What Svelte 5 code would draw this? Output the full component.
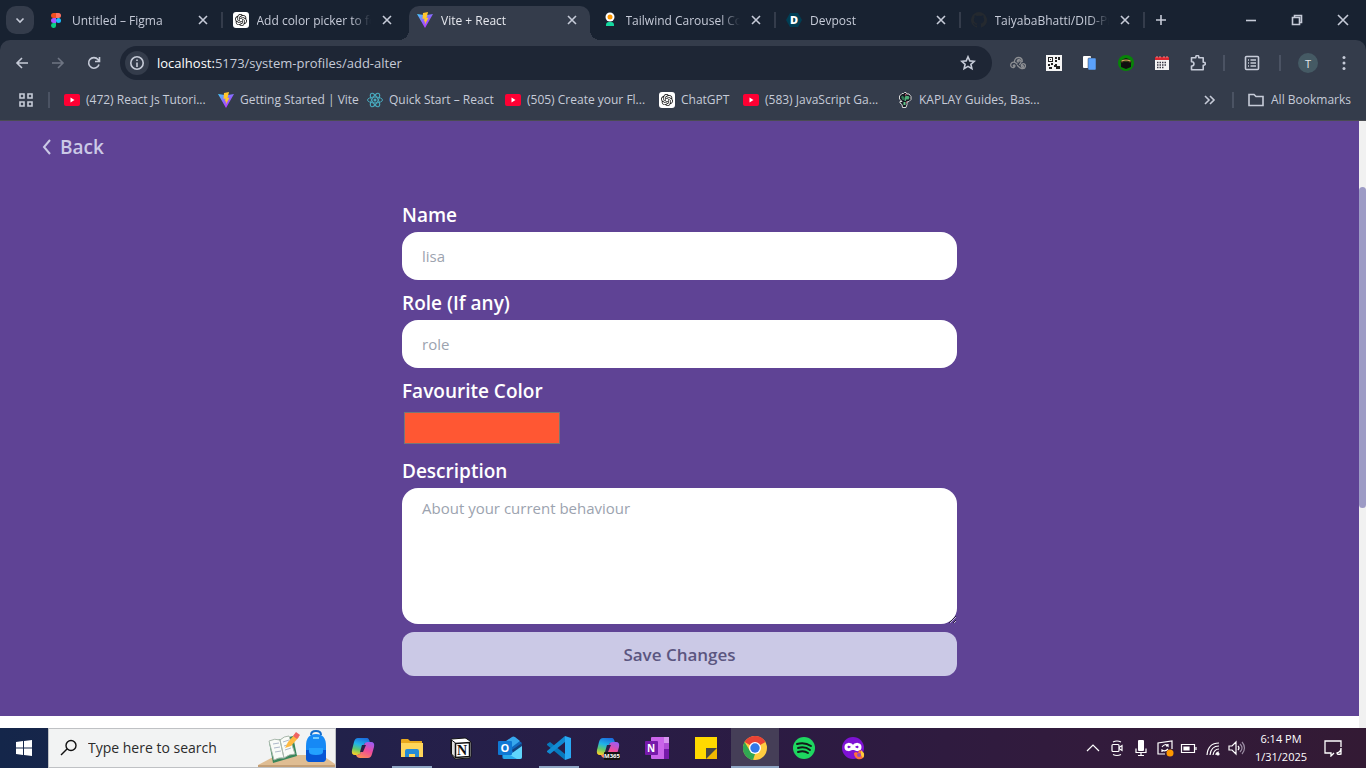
<script lang="ts">
	interface Tab {
		title: string;
		icon: string;
		active?: boolean;
		divider?: boolean;
	}

	interface App {
		name: string;
		icon: string;
		running?: boolean;
		focused?: boolean;
	}

	const tabs: Tab[] = [
		{ title: 'Untitled – Figma', icon: 'figma', divider: true },
		{ title: 'Add color picker to fo', icon: 'chatgpt' },
		{ title: 'Vite + React', icon: 'vite', active: true },
		{ title: 'Tailwind Carousel Co', icon: 'carousel', divider: true },
		{ title: 'Devpost', icon: 'devpost', divider: true },
		{ title: 'TaiyabaBhatti/DID-Pr', icon: 'github', divider: true }
	];

	const bookmarks = [
		{ title: '(472) React Js Tutori...', icon: 'youtube' },
		{ title: 'Getting Started | Vite', icon: 'vite' },
		{ title: 'Quick Start – React', icon: 'react' },
		{ title: '(505) Create your Fl...', icon: 'youtube' },
		{ title: 'ChatGPT', icon: 'chatgpt' },
		{ title: '(583) JavaScript Ga...', icon: 'youtube' },
		{ title: 'KAPLAY Guides, Bas...', icon: 'kaplay' }
	];

	const extensions = [
		{ name: 'Web extension', icon: 'swirl' },
		{ name: 'QR code', icon: 'qr' },
		{ name: 'Mobile simulator', icon: 'phones' },
		{ name: 'Black box', icon: 'box' },
		{ name: 'Calendar', icon: 'calendar' },
		{ name: 'Extensions', icon: 'puzzle' }
	];

	const apps: App[] = [
		{ name: 'Copilot', icon: 'copilot' },
		{ name: 'File Explorer', icon: 'explorer', running: true },
		{ name: 'Notion', icon: 'notion' },
		{ name: 'Outlook', icon: 'outlook' },
		{ name: 'Visual Studio Code', icon: 'vscode', running: true },
		{ name: 'Microsoft 365', icon: 'm365' },
		{ name: 'OneNote', icon: 'onenote' },
		{ name: 'Sticky Notes', icon: 'sticky' },
		{ name: 'Chrome', icon: 'chrome', running: true, focused: true },
		{ name: 'Spotify', icon: 'spotify' },
		{ name: 'Firefox Private', icon: 'private' }
	];

	const tray = ['up', 'meet', 'mic', 'sync', 'battery', 'wifi', 'volume'];

	let name = $state('');
	let role = $state('');
	let color = $state('#ff5733');
	let description = $state('');
</script>

{#snippet favicon(icon: string)}
	<svg class="favicon" viewBox="0 0 16 16" aria-hidden="true">
		{#if icon === 'figma'}
			<path d="M5.500 1H8v5H5.500a2.500 2.500 0 0 1 0-5z" fill="#f24e1e" />
			<path d="M8 1h2.500a2.500 2.500 0 0 1 0 5H8z" fill="#ff7262" />
			<path d="M5.500 6H8v5H5.500a2.500 2.500 0 0 1 0-5z" fill="#a259ff" />
			<circle cx="10.500" cy="8.500" r="2.500" fill="#1abcfe" />
			<path d="M5.500 11H8v2.300A2.500 2.500 0 1 1 5.500 11z" fill="#0acf83" />
		{:else if icon === 'chatgpt'}
			<rect width="16" height="16" rx="3" fill="#fff" />
			<path
				transform="translate(2 2) scale(0.5)"
				d="M22.2819 9.8211a5.9847 5.9847 0 0 0-.5157-4.9108 6.0462 6.0462 0 0 0-6.5098-2.9A6.0651 6.0651 0 0 0 4.9807 4.1818a5.9847 5.9847 0 0 0-3.9977 2.9 6.0462 6.0462 0 0 0 .7427 7.0966 5.98 5.98 0 0 0 .511 4.9107 6.051 6.051 0 0 0 6.5146 2.9001A5.9847 5.9847 0 0 0 13.2599 24a6.0557 6.0557 0 0 0 5.7718-4.2058 5.9894 5.9894 0 0 0 3.9977-2.9001 6.0557 6.0557 0 0 0-.7475-7.0729zm-9.022 12.6081a4.4755 4.4755 0 0 1-2.8764-1.0408l.1419-.0804 4.7783-2.7582a.7948.7948 0 0 0 .3927-.6813v-6.7369l2.02 1.1686a.071.071 0 0 1 .038.052v5.5826a4.504 4.504 0 0 1-4.4945 4.4944zm-9.6607-4.1254a4.4708 4.4708 0 0 1-.5346-3.0137l.142.0852 4.783 2.7582a.7712.7712 0 0 0 .7806 0l5.8428-3.3685v2.3324a.0804.0804 0 0 1-.0332.0615L9.74 19.9502a4.4992 4.4992 0 0 1-6.1408-1.6464zM2.3408 7.8956a4.485 4.485 0 0 1 2.3655-1.9728V11.6a.7664.7664 0 0 0 .3879.6765l5.8144 3.3543-2.0201 1.1685a.0757.0757 0 0 1-.071 0l-4.8303-2.7865A4.504 4.504 0 0 1 2.3408 7.872zm16.5963 3.8558L13.1038 8.364 15.1192 7.2a.0757.0757 0 0 1 .071 0l4.8303 2.7913a4.4944 4.4944 0 0 1-.6765 8.1042v-5.6772a.79.79 0 0 0-.407-.667zm2.0107-3.0231l-.142-.0852-4.7735-2.7818a.7759.7759 0 0 0-.7854 0L9.409 9.2297V6.8974a.0662.0662 0 0 1 .0284-.0615l4.8303-2.7866a4.4992 4.4992 0 0 1 6.6802 4.66zM8.3065 12.863l-2.02-1.1638a.0804.0804 0 0 1-.038-.0567V6.0742a4.4992 4.4992 0 0 1 7.3757-3.4537l-.142.0805L8.704 5.459a.7948.7948 0 0 0-.3927.6813zm1.0976-2.3654l2.602-1.4998 2.6069 1.4998v2.9994l-2.5974 1.4997-2.6067-1.4997Z"
				fill="#111"
			/>
		{:else if icon === 'vite'}
			<path d="M0 2l8 14 8-14-7.500 1.300z" fill="url(#vite-body)" />
			<path d="M11 0L6 1l-.5 6 2-.4-.6 3 1.300-.3-.5 3.400 3.800-7-2 .3z" fill="#ffc62b" />
		{:else if icon === 'carousel'}
			<circle cx="8" cy="5" r="4.500" fill="#fff" />
			<circle cx="8" cy="5" r="2.500" fill="#ff9800" />
			<path d="M4 14v-1a3 3 0 0 1 3-3h2a3 3 0 0 1 3 3v1z" fill="#14d9a0" />
		{:else if icon === 'devpost'}
			<path d="M4 1h8l4 7-4 7H4L0 8z" fill="#003e54" />
			<text x="8" y="12" text-anchor="middle" font-size="11" font-weight="800" fill="#fff">D</text>
		{:else if icon === 'github'}
			<path
				d="M8 0a8 8 0 0 0-2.500 15.600c.4 0 .5-.2.500-.4v-1.500c-2.200.5-2.700-1-2.700-1-.4-.9-.9-1.200-.9-1.200-.7-.5.100-.5.100-.5.800.100 1.200.8 1.200.8.7 1.300 1.900.9 2.300.7 0-.5.300-.9.500-1.100C4.800 11.200 2.900 10.500 2.900 7.400c0-.9.300-1.500.8-2.100-.1-.3-.4-1 .1-2.100 0 0 .7-.2 2.200.8a8 8 0 0 1 4 0c1.500-1 2.200-.8 2.200-.8.5 1.100.2 1.800.1 2.100.5.600.8 1.200.8 2.100 0 3.100-1.900 3.800-3.700 4 .3.300.6.800.6 1.500v2.300c0 .2.100.5.500.4A8 8 0 0 0 8 0z"
				fill="#24292f"
			/>
		{:else if icon === 'youtube'}
			<rect y="2" width="16" height="12" rx="2" fill="#ff0033" />
			<path d="M6.500 5.500v5L10.500 8z" fill="#fff" />
		{:else if icon === 'react'}
			<g fill="none" stroke="#48a9bd" stroke-width="1">
				<ellipse cx="8" cy="8" rx="7.500" ry="3" />
				<ellipse cx="8" cy="8" rx="7.500" ry="3" transform="rotate(60 8 8)" />
				<ellipse cx="8" cy="8" rx="7.500" ry="3" transform="rotate(120 8 8)" />
			</g>
			<circle cx="8" cy="8" r="1.500" fill="#48a9bd" />
		{:else if icon === 'kaplay'}
			<path
				d="M5 1.500h1.500l1-1H9l1 1.500h2l2 2.500v3L12 9.500l-2 .5v2.500l-1 3H5.500l-.5-3L3 11V9.500h2L2.500 7V4z"
				fill="#141820"
				stroke="#d8d8d8"
				stroke-width="1"
			/>
			<path d="M4 5l1.500-1.500L7 5v3L5.500 8z" fill="#2f7653" />
			<path d="M8.500 4h3l1 1.500-1 2H9v1.500H7.500V6z" fill="#4fae78" />
			<path d="M6.500 10h2v3h-2z" fill="#65c58b" />
			<path d="M8 2h1.500v1.500H8zM9 9.500h1V11H9z" fill="#b8546c" />
		{/if}
	</svg>
{/snippet}

{#snippet extensionIcon(icon: string)}
	<svg class="ext" viewBox="0 0 16 16" aria-hidden="true">
		{#if icon === 'swirl'}
			<g fill="none" stroke="#8d8f93" stroke-width="1.300" stroke-linecap="round">
				<path d="M4 11.500a.8.8 0 1 1 .8-1.200c.6 1.600-1.400 2.900-2.900 2S.2 9 1.800 7.800s4-.4 5.200 1.200" />
				<path d="M8.500 5.300a.9.900 0 1 1-1.200 1C7 4.500 9.500 4 10.500 5.300s.5 3-.8 4M4.500 7C4.300 4.500 6 2.500 8.300 2.500s4 1.700 4 4" />
				<path d="M12 10.800a.9.900 0 1 1 .4 1.500c-1.600-.5-1.500-3 .2-3.500s3.100 1 2.800 2.600-2 2.500-3.700 2.200S9 12 7.500 10.500" />
			</g>
		{:else if icon === 'qr'}
			<rect width="16" height="16" fill="#f5f5f5" />
			<path d="M2 2h5v5H2zM9 2h2v2H9zM12 2h2v3h-2zM9 5h2v2H9zM2 9h2v2H2zM5 8h2v2H5zM3 12h3v2H3zM9 9h2v2h3v3h-4v-2H8v-2h1z" fill="#222" />
			<path d="M3 3h3v3H3z" fill="#f5f5f5" />
			<path d="M4 4h1v1H4z" fill="#222" />
		{:else if icon === 'phones'}
			<rect x="1" y="1" width="8" height="12" rx="1" fill="#fff" />
			<rect x="6" y="3" width="8" height="12" rx="1" fill="#5ba1fa" stroke="#343c4b" stroke-width="0.500" />
		{:else if icon === 'box'}
			<circle cx="8" cy="8" r="8" fill="#078407" />
			<path d="M3 7h10v5l-5 2-5-2z" fill="#101010" />
			<path d="M2 7q6-6 12 0l-2 1q-4-3-8 0z" fill="#382916" />
			<path d="M3 6q5-4 10 0l-1 .5q-4-2-8 0z" fill="#d6ad61" />
			<path d="M4 4.500L8 3l4 1.500z" fill="#101010" />
		{:else if icon === 'calendar'}
			<path d="M1 2h14v13H1z" fill="#f4f4f4" />
			<path d="M1 2h14v3H1z" fill="#db2730" />
			<path d="M3 1v2M6 1v2M10 1v2M13 1v2" stroke="#e88" />
			<path d="M3 7.500h10M3 10h10M3 12.500h7" stroke="#3a3946" stroke-width="1.500" stroke-dasharray="1.500 1" />
		{:else if icon === 'puzzle'}
			<path
				d="M1.500 2.800h4.300V2a1.500 1.500 0 0 1 3 0v.8h4.400v4.400h.6a1.500 1.500 0 0 1 0 3h-.6v4.500H1.500v-3.700h.3a2 2 0 0 0 0-4.300h-.3z"
				fill="none"
				stroke="#c6cbd8"
				stroke-width="1.600"
				stroke-linejoin="round"
			/>
		{/if}
	</svg>
{/snippet}

{#snippet appIcon(icon: string)}
	<svg class="app-icon" viewBox="0 0 24 24" aria-hidden="true">
		{#if icon === 'copilot' || icon === 'm365'}
			<path d="M7 2h9q2 0 3 5h-4q-2 0-3 4l-2 5q-1 3-4 3H4q-4 0-3-5l2-8q1-4 4-4z" fill="url(#copilot-left)" />
			<path d="M17 6h3q4 0 3 5l-2 7q-1 4-4 4H9q-3 0-4-3 4 0 5-3l3-7q1-3 4-3z" fill="url(#copilot-right)" />
			<path d="M11 9h4l-3 7H9z" fill="#291f48" />
			{#if icon === 'm365'}
				<rect x="8" y="16" width="16" height="8" rx="1" fill="#111" />
				<text x="16" y="22" text-anchor="middle" font-size="6" font-weight="700" fill="#fff">M365</text>
			{/if}
		{:else if icon === 'explorer'}
			<path d="M1 4q0-1 1-1h6l2 2h12v16H1z" fill="#e9a91d" />
			<path d="M1 7h22v14H1z" fill="#ffd65a" />
			<path d="M5 21v-6q0-2 2-2h10q2 0 2 2v6h-4v-3H9v3z" fill="#258bd6" />
		{:else if icon === 'notion'}
			<path d="M2 4q0-1 1-1l13-1q1 0 2 1l3 2q1 1 1 2v13q0 2-2 2l-13 1q-1 0-2-1l-2-3q-1-1-1-2z" fill="#fff" stroke="#111" />
			<path d="M2.500 4L6.500 7v15L2.500 18z" fill="#ddd" stroke="#111" />
			<path d="M6.500 7.500l14-1v14l-14 1z" fill="#fff" stroke="#111" stroke-width="1.500" />
			<text x="13" y="19" text-anchor="middle" class="serif" font-size="14" font-weight="700" fill="#111">N</text>
		{:else if icon === 'outlook'}
			<path d="M4 8l9-6q2-1 4 0l7 5v14q0 2-2 2H6q-2 0-2-2z" fill="#1067bd" />
			<path d="M8 5l6-4q1-1 3 0l5 4-8 6z" fill="#37a7ed" />
			<path d="M14 14l10-7v5l-8 6z" fill="#14427e" />
			<path d="M6 23L24 10v11q0 2-2 2z" fill="#60d5fb" />
			<path d="M5 15l14 8H6q-1 0-1-2z" fill="#28a8ea" />
			<rect y="5" width="14" height="14" rx="1" fill="#0f78d4" />
			<text x="7" y="16" text-anchor="middle" font-size="11" font-weight="700" fill="#fff">O</text>
		{:else if icon === 'vscode'}
			<path d="M0 8l3-2 15 12v6L0 9z" fill="#0779bd" />
			<path d="M0 16l3 2L18 6V0L0 15z" fill="#118ad2" />
			<path d="M18 0l6 2v20l-6 2z" fill="#29a9f3" />
		{:else if icon === 'onenote'}
			<rect x="6" y="1" width="18" height="22" rx="1" fill="#ca64ea" />
			<path d="M19 1h5v6h-5z" fill="#d794f0" />
			<path d="M19 7h5v6h-5z" fill="#ae4bd5" />
			<path d="M19 13h5v10h-5z" fill="#7719aa" />
			<rect y="5" width="13" height="14" rx="1" fill="#7719aa" />
			<text x="6" y="16" text-anchor="middle" font-size="10" font-weight="700" fill="#fff">N</text>
		{:else if icon === 'sticky'}
			<path d="M1 1h22v22H1z" fill="#ffd900" />
			<path d="M12 23V12h11v11z" fill="#f1b800" />
			<path d="M12 12h11L12 23z" fill="#464646" />
		{:else if icon === 'chrome'}
			<circle cx="12" cy="12" r="12" fill="#ffcd40" />
			<path d="M12 12L1.600 6a12 12 0 0 1 20.800 0z" fill="#ea4335" />
			<path d="M1.600 6L7 15l5 3-2 6A12 12 0 0 1 1.600 6z" fill="#31a852" />
			<circle cx="12" cy="12" r="6" fill="#fff" />
			<circle cx="12" cy="12" r="4.700" fill="#3378e8" />
		{:else if icon === 'spotify'}
			<circle cx="12" cy="12" r="11" fill="#1ed760" />
			<path d="M5 8q8-2 14 2M6 12q7-2 12 2M6 16q6-2 10 1" fill="none" stroke="#121a19" stroke-width="2" stroke-linecap="round" />
		{:else if icon === 'private'}
			<circle cx="12" cy="12" r="11" fill="#7e12d4" />
			<path d="M12 11c-3-4-7-3-7 0s4 4 7 0 7-3 7 0-4 4-7 0z" fill="none" stroke="#fff" stroke-width="3" />
			<path d="M13 17l2-1 2 1 1-3q5 2 5 5c0 6-10 6-10-2z" fill="#ff7238" />
			<circle cx="18" cy="19" r="2" fill="#9749c0" />
			<path d="M20 14q5 4 2 8l-2-3z" fill="#ffcc39" />
		{/if}
	</svg>
{/snippet}

{#snippet trayIcon(icon: string)}
	<svg class="tray-icon" viewBox="0 0 18 18" fill="none" stroke="#fff" stroke-width="1.200" aria-hidden="true">
		{#if icon === 'up'}
			<path d="M3 12l6-6 6 6" />
		{:else if icon === 'meet'}
			<rect x="4" y="5.500" width="7" height="7" rx="1" />
			<path d="M11 8.500l3-2v5l-3-2M5 3q4-2 8 0M5 15.500q4 2 8 0" />
		{:else if icon === 'mic'}
			<rect x="6" y="1" width="6" height="11" rx="1" fill="#fff" stroke="none" />
			<path d="M4 9.500v4h10v-4M9 14v2M6 16.500h6" />
		{:else if icon === 'sync'}
			<path d="M9 15H2V4l14-2v8" />
			<path d="M6 8q3-4 6-1V5M12 7h-2M12 10q-3 3-6 1v2" />
			<circle cx="14" cy="14" r="3.500" fill="#ff9800" stroke="none" />
		{:else if icon === 'battery'}
			<path d="M1.500 5.500h13v8h-13zM16 8v3" />
			<path d="M4 8h5v3H4z" fill="#fff" />
		{:else if icon === 'wifi'}
			<path d="M3 16Q4 4 15 4M6 16q1-9 9-9M9 16q1-6 6-6M12 16q0-3 3-3" />
			<circle cx="14" cy="15" r="1" fill="#fff" />
		{:else if icon === 'volume'}
			<path d="M1 7h3l4-4v12l-4-4H1zM10 7q2 2 0 4" />
			<path d="M12 5q4 4 0 8M14 3q5 6 0 12" stroke="#9b8da3" />
		{/if}
	</svg>
{/snippet}

<svg class="defs" aria-hidden="true">
	<defs>
		<linearGradient id="vite-body" x1="0" y1="0" x2="0.7" y2="1">
			<stop offset="0" stop-color="#41d1ff" />
			<stop offset="0.5" stop-color="#8b66ff" />
			<stop offset="1" stop-color="#bd34fe" />
		</linearGradient>
		<linearGradient id="copilot-left" x1="0.6" y1="0" x2="0.3" y2="1">
			<stop offset="0" stop-color="#1b6fe0" />
			<stop offset="0.4" stop-color="#20b4e8" />
			<stop offset="0.7" stop-color="#62c96b" />
			<stop offset="1" stop-color="#f7cf29" />
		</linearGradient>
		<linearGradient id="copilot-right" x1="0.8" y1="0" x2="0.3" y2="1">
			<stop offset="0" stop-color="#9b5cf5" />
			<stop offset="0.5" stop-color="#f04b9b" />
			<stop offset="1" stop-color="#ff8b55" />
		</linearGradient>
	</defs>
</svg>

<div class="desktop">
	<header class="browser">
		<div class="tab-row">
			<button class="tab-search" aria-label="Search tabs">
				<svg viewBox="0 0 16 16"><path d="M4.500 6.500L8 10l3.500-3.500" /></svg>
			</button>
			<div class="tabs">
				{#each tabs as tab}
					<div class="tab" class:active={tab.active} class:divider={tab.divider}>
						{@render favicon(tab.icon)}
						<span class="tab-title">{tab.title}</span>
						<button class="tab-close" aria-label="Close {tab.title}">
							<svg viewBox="0 0 16 16"><path d="M4 4l8 8M12 4l-8 8" /></svg>
						</button>
					</div>
				{/each}
			</div>
			<button class="new-tab" aria-label="New tab">
				<svg viewBox="0 0 16 16"><path d="M8 3v10M3 8h10" /></svg>
			</button>
			<div class="window-controls">
				<button aria-label="Minimize"><svg viewBox="0 0 16 16"><path d="M3 8.500h10" /></svg></button>
				<button aria-label="Restore">
					<svg viewBox="0 0 16 16"><path d="M3.500 5.500h7v7h-7zM5.500 5.500v-2h7v7h-2" /></svg>
				</button>
				<button aria-label="Close"><svg viewBox="0 0 16 16"><path d="M3 3l10 10M13 3L3 13" /></svg></button>
			</div>
		</div>

		<div class="toolbar">
			<button class="tool" aria-label="Back">
				<svg viewBox="0 0 16 16"><path d="M14 8H3M8 3L3 8l5 5" /></svg>
			</button>
			<button class="tool dim" aria-label="Forward">
				<svg viewBox="0 0 16 16"><path d="M2 8h11M8 3l5 5-5 5" /></svg>
			</button>
			<button class="tool" aria-label="Reload">
				<svg viewBox="0 0 16 16"><path d="M13 9.500A5.300 5.300 0 1 1 12 4.500l1 1.500M13.500 2v4.500H9" /></svg>
			</button>
			<div class="omnibox">
				<button class="site-info" aria-label="Site information">
					<svg viewBox="0 0 16 16"><circle cx="8" cy="8" r="6.200" /><path d="M8 7.500V12M8 4.500v1.500" /></svg>
				</button>
				<a class="url" href="http://localhost:5173/system-profiles/add-alter"><b>localhost:</b>5173/system-profiles/add-alter</a>
				<button class="star" aria-label="Bookmark this page">
					<svg viewBox="0 0 16 16">
						<path d="M8 1.800l1.800 4.100 4.500.4-3.400 3 1 4.400L8 11.400l-3.900 2.300 1-4.400-3.400-3 4.500-.4z" />
					</svg>
				</button>
			</div>
			<div class="extensions">
				{#each extensions as extension}
					<button class="tool" aria-label={extension.name}>{@render extensionIcon(extension.icon)}</button>
				{/each}
			</div>
			<span class="rule"></span>
			<button class="tool wide" aria-label="Side panel">
				<svg viewBox="0 0 16 16">
					<rect x="1.500" y="1.500" width="13" height="13" rx="1" />
					<path d="M4 5h1M4 8h1M4 11h1M6.500 5H12M6.500 8H12M6.500 11H12" />
				</svg>
			</button>
			<span class="rule"></span>
			<button class="tool wide" aria-label="Profile"><span class="avatar">T</span></button>
			<button class="tool menu" aria-label="Menu">
				<svg viewBox="0 0 16 16">
					<g class="solid">
						<circle cx="8" cy="2.500" r="1.500" />
						<circle cx="8" cy="8" r="1.500" />
						<circle cx="8" cy="13.500" r="1.500" />
					</g>
				</svg>
			</button>
		</div>

		<nav class="bookmarks">
			<button class="apps-grid" aria-label="Apps">
				<svg viewBox="0 0 16 16"><path d="M2 2h4v4H2zM10 2h4v4h-4zM2 10h4v4H2zM10 10h4v4h-4z" /></svg>
			</button>
			<span class="rule"></span>
			<div class="bookmark-list">
				{#each bookmarks as bookmark}
					<a class="bookmark" href="#bookmark">
						{@render favicon(bookmark.icon)}
						<span>{bookmark.title}</span>
					</a>
				{/each}
			</div>
			<button class="more" aria-label="More bookmarks">
				<svg viewBox="0 0 16 16"><path d="M3 4l4 4-4 4M8 4l4 4-4 4" /></svg>
			</button>
			<span class="rule"></span>
			<button class="all">
				<svg viewBox="0 0 16 16"><path d="M1 13.500v-11h5l2 2h7v9z" /></svg>
				All Bookmarks
			</button>
		</nav>
	</header>

	<div class="viewport">
		<main class="page">
			<a class="back" href="#back">
				<svg viewBox="0 0 12 16" aria-hidden="true"><path d="M10 1L4 8l6 7" /></svg>
				Back
			</a>
			<form onsubmit={(e) => e.preventDefault()}>
				<div class="field">
					<label for="name">Name</label>
					<input id="name" type="text" placeholder="lisa" bind:value={name} />
				</div>
				<div class="field">
					<label for="role">Role (If any)</label>
					<input id="role" type="text" placeholder="role" bind:value={role} />
				</div>
				<div class="field">
					<label for="color">Favourite Color</label>
					<input id="color" type="color" bind:value={color} />
				</div>
				<div class="field">
					<label for="description">Description</label>
					<textarea id="description" placeholder="About your current behaviour" bind:value={description}></textarea>
				</div>
				<button class="save" type="submit">Save Changes</button>
			</form>
		</main>
		<div class="scrollbar"><div class="thumb"></div></div>
	</div>

	<footer class="taskbar">
		<button class="start" aria-label="Start">
			<svg viewBox="0 0 16 16"><path d="M0 2l7-1v6.500H0zM8 1l8-1v7.500H8zM0 8.500h7V15l-7-1zM8 8.500h8V16l-8-1z" /></svg>
		</button>
		<label class="search">
			<svg class="lens" viewBox="0 0 18 18"><circle cx="11" cy="6.500" r="5" /><path d="M7 10l-6 6" /></svg>
			<input type="text" placeholder="Type here to search" aria-label="Type here to search" />
			<svg class="art" viewBox="0 0 78 38" aria-hidden="true">
				<path d="M1 36l19-10h45l13 9v3H1z" fill="#dfbd93" />
				<path d="M1 36h77v2H1z" fill="#c49f75" />
				<path d="M12 13l24-6 4 20-24 7z" fill="#39875b" />
				<path d="M12 12q6-3 11-1l4 18q-5-1-10 2zM23 11q4-4 9-4l6 18q-6 0-11 4z" fill="#f9fbf7" stroke="#a9b8ac" />
				<path d="M16 15l6-1M17 19l6-1M18 23l6-1M26 13l6-2M27 17l6-2M28 21l6-2" stroke="#aeb8ca" />
				<path d="M28 19l3-6 7-8 4 3-8 9z" fill="#ffb940" />
				<path d="M36 7l3-4 4 3-3 4z" fill="#ef6464" />
				<path d="M54 6q0-4 5-4t5 4" fill="none" stroke="#116bca" stroke-width="2" />
				<path d="M49 17q0-12 10-12t10 12v12q0 4-4 4H53q-4 0-4-4z" fill="#1689f5" />
				<path d="M49 21h20v8q0 4-4 4H53q-4 0-4-4z" fill="#0756d5" />
				<path d="M52 19h14v4q0 3-7 3t-7-3z" fill="#23a1ff" />
				<path d="M56 9h6" stroke="#74cbff" stroke-width="2" />
			</svg>
		</label>
		<div class="apps">
			{#each apps as app}
				<button class="app" class:running={app.running} class:focused={app.focused} aria-label={app.name}>
					{@render appIcon(app.icon)}
				</button>
			{/each}
		</div>
		<div class="tray">
			{#each tray as icon}
				<button aria-label={icon}>{@render trayIcon(icon)}</button>
			{/each}
		</div>
		<div class="clock">
			<span>6:14 PM</span>
			<span>1/31/2025</span>
		</div>
		<button class="notifications" aria-label="Notifications">
			<svg viewBox="0 0 18 18"><path d="M10 14l-3 3v-3H1V2h16v6M17 9q0 4-4 5 0 2 4 1z" /></svg>
		</button>
	</footer>
</div>

<style>
	:global(body) {
		margin: 0;
	}

	.desktop {
		display: flex;
		flex-direction: column;
		min-height: 100vh;
		font-family: 'Segoe UI', 'Open Sans', 'Noto Sans', sans-serif;
	}

	.desktop *,
	.desktop *::before,
	.desktop *::after {
		box-sizing: border-box;
	}

	.defs {
		position: absolute;
		width: 0;
		height: 0;
	}

	button {
		display: flex;
		align-items: center;
		justify-content: center;
		flex: none;
		padding: 0;
		border: 0;
		background: none;
		color: inherit;
		font: inherit;
	}

	a {
		color: inherit;
		text-decoration: none;
	}

	svg {
		flex: none;
		width: 16px;
		height: 16px;
	}

	.serif {
		font-family: 'Liberation Serif', serif;
	}

	/* browser chrome */
	.browser {
		background: #182231;
		color: #c6cbd8;
		font-size: 12px;
	}

	.browser button > svg:not(.ext) {
		fill: none;
		stroke: #c6cbd8;
		stroke-width: 1.6;
	}

	.tab-row {
		display: flex;
		align-items: center;
		height: 40px;
		padding-left: 6px;
	}

	.tab-search {
		width: 28px;
		height: 28px;
		margin-right: 6px;
		border-radius: 10px;
		background: #343c4b;
	}

	.browser .tab-search svg {
		stroke: #e6e8ee;
		stroke-width: 2;
	}

	.tabs {
		display: flex;
		flex: 0 1 1107px;
		min-width: 0;
		align-self: flex-end;
	}

	.tab {
		position: relative;
		display: flex;
		align-items: center;
		flex: 1;
		min-width: 0;
		gap: 8px;
		height: 34px;
		margin-right: 4px;
		padding: 0 10px 6px 8px;
	}

	.tab.active {
		border-radius: 10px 10px 0 0;
		background: #343c4b;
		color: #e6e8ee;
	}

	.tab.active::before,
	.tab.active::after {
		content: '';
		position: absolute;
		bottom: 0;
		width: 10px;
		height: 10px;
	}

	.tab.active::before {
		right: 100%;
		background: radial-gradient(circle at 0 0, transparent 10px, #343c4b 10px);
	}

	.tab.active::after {
		left: 100%;
		background: radial-gradient(circle at 100% 0, transparent 10px, #343c4b 10px);
	}

	.tab.divider::after {
		content: '';
		position: absolute;
		top: 6px;
		right: -2px;
		width: 2px;
		height: 16px;
		background: #343c4b;
	}

	.tab-title {
		flex: 1;
		min-width: 0;
		overflow: hidden;
		white-space: nowrap;
		mask-image: linear-gradient(to right, #000 calc(100% - 20px), transparent);
	}

	.new-tab {
		width: 28px;
		height: 28px;
	}

	.window-controls {
		display: flex;
		margin-left: auto;
	}

	.window-controls button {
		width: 46px;
		height: 40px;
	}

	.browser .window-controls svg {
		stroke: #fff;
		stroke-width: 1;
	}

	.toolbar {
		display: flex;
		align-items: center;
		height: 46px;
		padding: 0 6px 0 4px;
		border-radius: 10px 10px 0 0;
		background: #343c4b;
	}

	.tool {
		width: 36px;
		height: 34px;
	}

	.tool.dim {
		opacity: 0.4;
	}

	.tool.wide {
		width: 40px;
	}

	.tool.menu {
		width: 32px;
	}

	.browser .solid {
		fill: #c6cbd8;
		stroke: none;
	}

	.omnibox {
		display: flex;
		align-items: center;
		flex: 1;
		min-width: 0;
		height: 34px;
		margin: 0 8px;
		padding: 0 12px 0 5px;
		border-radius: 17px;
		background: #1e2635;
	}

	.site-info {
		width: 24px;
		height: 24px;
		border-radius: 12px;
		background: #343c4b;
	}

	.browser .site-info svg {
		stroke: #e0e3ea;
		stroke-width: 1.4;
	}

	.star {
		width: 24px;
	}

	.url {
		flex: 1;
		margin-left: 8px;
		font-size: 13px;
	}

	.url b {
		color: #fff;
		font-weight: 400;
	}

	.extensions {
		display: flex;
	}

	.rule {
		display: flex;
		justify-content: center;
		flex: none;
		width: 16px;
	}

	.rule::after {
		content: '';
		width: 2px;
		height: 16px;
		background: #4b5363;
	}

	.avatar {
		display: grid;
		place-items: center;
		width: 20px;
		height: 20px;
		border-radius: 50%;
		background: #455a64;
		color: #e4e8ea;
		font-size: 11px;
	}

	.bookmarks {
		display: flex;
		align-items: center;
		padding: 0 15px 7px 10px;
		height: 35px;
		border-bottom: 1px solid #4a4c52;
		background: #343c4b;
	}

	.apps-grid {
		width: 31px;
	}

	.bookmark-list {
		display: grid;
		grid-template-columns: 154px 149px 138px 154px 84px 154px 154px;
		flex: 1;
		min-width: 0;
		margin-left: 7px;
	}

	.bookmark {
		display: flex;
		align-items: center;
		gap: 6px;
		height: 28px;
		white-space: nowrap;
	}

	.more {
		width: 30px;
	}

	.all {
		gap: 7px;
		margin-left: 7px;
		white-space: nowrap;
	}

	/* page */
	.viewport {
		display: flex;
		flex: 1;
		background: #fff;
	}

	.page {
		flex: 1;
		margin-bottom: 12px;
		padding: 12px 40px 40px;
		background: #5f4395;
	}

	.back {
		display: inline-flex;
		align-items: center;
		gap: 8px;
		height: 28px;
		color: #cbc9e6;
		font-size: 19px;
		font-weight: 600;
		line-height: 28px;
	}

	.back svg {
		width: 12px;
		fill: none;
		stroke: #cbc9e6;
		stroke-width: 2;
	}

	form {
		display: flex;
		flex-direction: column;
		gap: 8px;
		max-width: 555px;
		margin: 39px auto 0;
	}

	.field {
		display: flex;
		flex-direction: column;
		align-items: stretch;
	}

	label[for] {
		padding-bottom: 2px;
		color: #fff;
		font-size: 19px;
		font-weight: 600;
		line-height: 30px;
	}

	.field input[type='text'],
	textarea {
		width: 100%;
		margin: 0;
		padding: 0 20px;
		border: 0;
		border-radius: 16px;
		background: #fff;
		color: #1f2937;
		font: 400 15px/24px 'Segoe UI', 'Open Sans', 'Noto Sans', sans-serif;
	}

	.field input[type='text'] {
		height: 48px;
	}

	textarea {
		display: block;
		height: 136px;
		padding: 8px 20px;
		resize: vertical;
	}

	.field input::placeholder,
	textarea::placeholder {
		color: #9ca3af;
	}

	input[type='color'] {
		width: 160px;
		height: 40px;
		padding: 0;
		border: 0;
		background: none;
	}

	.save {
		height: 44px;
		border-radius: 12px;
		background: #cbc9e6;
		color: #5b5680;
		font-size: 17px;
		font-weight: 600;
	}

	.scrollbar {
		flex: none;
		width: 7px;
		padding-top: 66px;
		background: #f1f1f1;
	}

	.thumb {
		height: 321px;
		border-radius: 4px;
		background: #9d9bc5;
	}

	/* taskbar */
	.taskbar {
		display: flex;
		align-items: stretch;
		height: 40px;
		background: linear-gradient(to right, #14264a, #24204a 30%, #2b1b43 55%, #321b3c 80%, #331a34);
		color: #fff;
	}

	.start {
		width: 48px;
	}

	.start svg {
		fill: #fff;
	}

	.search {
		display: flex;
		align-items: center;
		flex: none;
		width: 288px;
		padding-left: 11px;
		border: 1px solid #bfc1c4;
		background: #f2f3f3;
	}

	.lens {
		width: 18px;
		height: 18px;
		fill: none;
		stroke: #111;
		stroke-width: 1.4;
	}

	.search input {
		flex: 1;
		min-width: 0;
		margin-left: 10px;
		padding: 0;
		border: 0;
		background: none;
		font: 400 14px/20px 'Segoe UI', 'Open Sans', 'Noto Sans', sans-serif;
	}

	.search input::placeholder {
		color: #2b2b2b;
	}

	.art {
		width: 78px;
		height: 38px;
	}

	.apps {
		display: flex;
		gap: 1px;
		margin-left: 3px;
	}

	.app {
		position: relative;
		width: 48px;
	}

	.app-icon {
		width: 24px;
		height: 24px;
	}

	.app.running::after {
		content: '';
		position: absolute;
		right: 4px;
		bottom: 0;
		left: 4px;
		height: 2px;
		background: #8fa6c4;
	}

	.app.focused {
		background: #453e57;
	}

	.app.focused::after {
		right: 0;
		left: 0;
	}

	.tray {
		display: flex;
		margin-left: auto;
	}

	.tray button {
		width: 24px;
	}

	.tray-icon {
		width: 18px;
		height: 18px;
	}

	.clock {
		display: flex;
		flex-direction: column;
		align-items: center;
		width: 64px;
		padding-top: 2px;
		font-size: 11px;
		line-height: 18px;
	}

	.notifications {
		width: 40px;
		margin-right: 13px;
	}

	.notifications svg {
		width: 18px;
		height: 18px;
		fill: none;
		stroke: #fff;
		stroke-width: 1.3;
	}
</style>
